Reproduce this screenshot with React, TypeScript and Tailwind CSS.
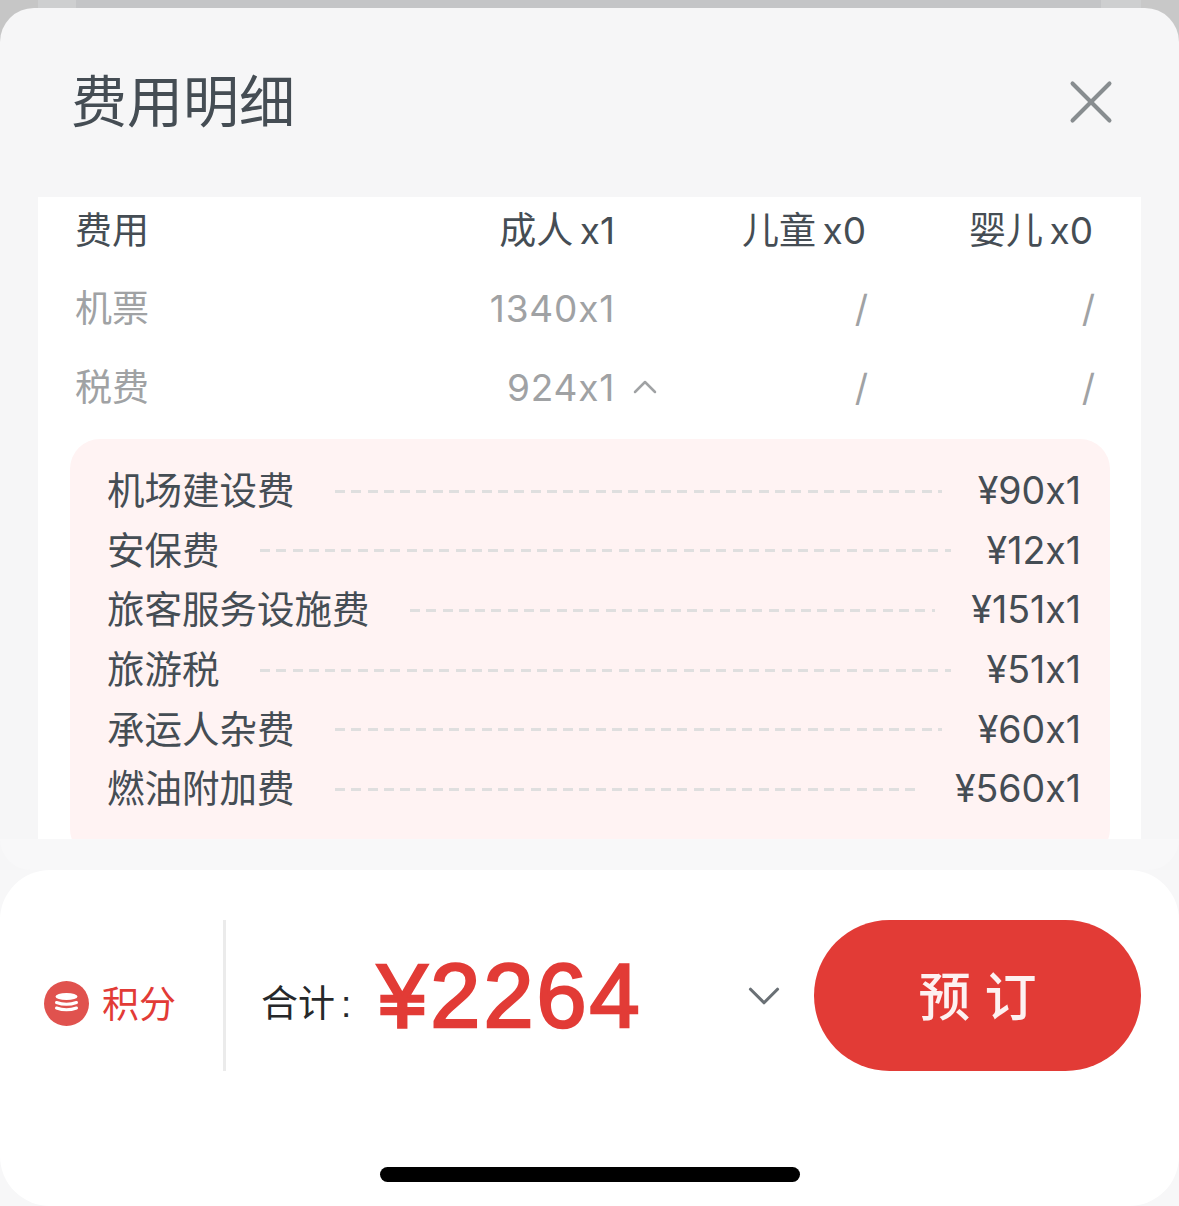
import { ChevronDown, ChevronUp, X } from 'lucide-react';

const fees = [
  { name: '机场建设费', value: '¥90x1' },
  { name: '安保费', value: '¥12x1' },
  { name: '旅客服务设施费', value: '¥151x1' },
  { name: '旅游税', value: '¥51x1' },
  { name: '承运人杂费', value: '¥60x1' },
  { name: '燃油附加费', value: '¥560x1' },
];

const rows = [
  { cells: ['费用', '成人 x1', '儿童 x0', '婴儿 x0'], muted: false },
  { cells: ['机票', '1340x1', '/', '/'], muted: true },
  { cells: ['税费', '924x1', '/', '/'], muted: true, expanded: true },
];

function CoinIcon() {
  return (
    <svg viewBox="0 0 45 45" className="h-[45px] w-[45px] shrink-0">
      <circle cx="22.5" cy="22.5" r="22.5" fill="#e0524e" />
      <ellipse cx="22.5" cy="15.5" rx="11" ry="3.6" fill="#fff" />
      <path d="M12.5 21.5q10 3.6 20 0" fill="none" stroke="#fff" strokeWidth="3" strokeLinecap="round" />
      <path d="M12.5 27q10 3.6 20 0" fill="none" stroke="#fff" strokeWidth="3" strokeLinecap="round" />
    </svg>
  );
}

export default function App() {
  return (
    <div className="h-[1206px] w-[1179px] overflow-hidden bg-[#f7f7f8] font-['Inter','Noto_Sans_CJK_SC',sans-serif] [font-variant-ligatures:none] [font-feature-settings:'calt'_0]">
      <div className="bg-[linear-gradient(to_right,#c6c6c6_38px,#cecfd0_38px,#cecfd0_76px,#c4c5c7_76px,#c4c5c7_1101px,#cecfd0_1101px,#cecfd0_1141px,#c8c8c8_1141px)] pt-2">
        <div className="rounded-t-[34px] bg-[#f6f6f7]">
          <div className="flex h-[189px] items-start justify-between pl-[71px] pr-[51px] pt-[60px]">
            <h1 className="text-[56px] leading-[68px] font-normal text-[#454d54]">费用明细</h1>
            <X className="-mt-[3px] h-[74px] w-[74px] text-[#888d90]" strokeWidth={1.3} />
          </div>

          {/* table gets cut off by the footer */}
          <div className="mx-[38px] h-[642px] overflow-hidden bg-white">
            <div className="-mt-[6px]">
              {rows.map((row) => (
                <div
                  key={row.cells[0]}
                  className={`grid h-[78.5px] grid-cols-[200px_1fr_251px_227px] items-center pl-[37px] pr-[48px] text-[37px] [word-spacing:-4px] ${row.muted ? 'text-[#a0a2a4]' : 'text-[#454d54]'}`}
                >
                  <span>{row.cells[0]}</span>
                  <span className={row.muted ? 'relative text-right tracking-[0.8px]' : 'relative text-right'}>
                    {row.cells[1]}
                    {row.expanded && (
                      <ChevronUp className="absolute right-[-50px] top-1/2 h-[40px] w-[40px] -translate-y-1/2 text-[#a0a2a4]" strokeWidth={1.5} />
                    )}
                  </span>
                  <span className={row.muted ? '-mr-[2px] text-right' : 'text-right'}>{row.cells[2]}</span>
                  <span className={row.muted ? '-mr-[2px] text-right' : 'text-right'}>{row.cells[3]}</span>
                </div>
              ))}
            </div>

            <div className="ml-[32px] mr-[31px] mt-[12px] rounded-[30px] bg-[#fff3f3] pb-[40px] pl-[37px] pr-[29px] pt-[23px]">
              {fees.map((fee) => (
                <div key={fee.name} className="flex h-[59.6px] items-center text-[37.5px] text-[#454d54]">
                  <span>{fee.name}</span>
                  <span className="ml-10 mr-[36px] h-[3px] flex-1 bg-[repeating-linear-gradient(to_right,#dfdfdf_0,#dfdfdf_10px,transparent_10px,transparent_16.3px)]" />
                  <span>{fee.value}</span>
                </div>
              ))}
            </div>
          </div>

          <div className="h-[31px] rounded-b-[40px] bg-[#f8f8f9]" />
        </div>
      </div>

      <div className="h-[336px] rounded-[50px] bg-white">
        <div className="flex pl-[44px] pr-[38px] pt-[50px]">
          <div className="flex h-[151px] w-[179px] items-center pt-[16px]">
            <CoinIcon />
            <span className="ml-[13px] mt-[2px] text-[37px] text-[#e23b36]">积分</span>
          </div>
          <div className="h-[151px] w-[3px] bg-[#ebebeb]" />
          <div className="flex h-[151px] flex-1 items-center pl-[35px]">
            <span className="mt-[18px] text-[37px] text-[#26282a]">
              合计<span className="ml-[6px] font-['Liberation_Sans']">:</span>
            </span>
            <span className="ml-[26px] font-['Liberation_Sans'] text-[90px] leading-none tracking-[3px] text-[#e23b36] [-webkit-text-stroke:2.5px_#e23b36]">¥2264</span>
            <ChevronDown className="ml-auto mr-[23px] h-[54px] w-[54px] text-[#6a7075]" strokeWidth={1.4} />
          </div>
          <button className="flex h-[151px] w-[327px] items-center justify-center rounded-[76px] bg-[#e23b36] pt-[5px] text-[52px] font-medium text-[#fdf1f1]">
            预 订
          </button>
        </div>
        <div className="mx-auto mt-[96px] h-[15px] w-[420px] rounded-full bg-black" />
      </div>
    </div>
  );
}
